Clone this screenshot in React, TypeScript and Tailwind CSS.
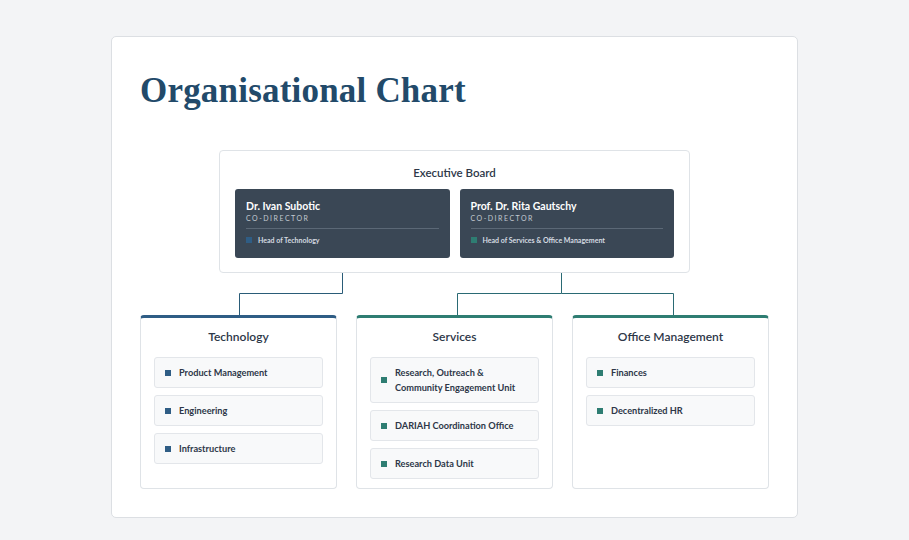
import React from "react";

const Item = ({ text, color }: { text: React.ReactNode; color: string }) => (
  <div className="flex items-center gap-[8px] rounded-[3px] border border-[#e3e6ea] bg-[#f8f9fa] px-[10px] py-[7px] min-h-[31px]">
    <span className={`w-[6px] h-[6px] shrink-0 ${color}`} />
    <span className="text-[9.2px] leading-[15px] font-bold text-[#2d3748]">{text}</span>
  </div>
);

const Dept = ({ title, top, sq, items }: { title: string; top: string; sq: string; items: React.ReactNode[] }) => (
  <div className={`flex-1 rounded-[4px] border border-[#dfe3e7] border-t-[3px] ${top} bg-white px-[13px] pt-[11px] pb-[14px] h-[174px]`}>
    <div className="text-center text-[12px] leading-[16px] font-semibold text-[#2d3748] mb-[12px]">{title}</div>
    <div className="flex flex-col gap-[7px]">
      {items.map((t, i) => <Item key={i} text={t} color={sq} />)}
    </div>
  </div>
);

const Person = ({ name, head, sq }: { name: string; head: string; sq: string }) => (
  <div className="flex-1 rounded-[3px] bg-[#3a4755] px-[11px] pt-[10px] pb-[9px] h-[69px]">
    <div className="text-[10.5px] font-bold text-white leading-[14px]">{name}</div>
    <div className="text-[7px] tracking-[1.5px] text-[#c3cad2] leading-[10px]">CO-DIRECTOR</div>
    <div className="border-t border-[#5b6876] mt-[5px] pt-[6px] flex items-center gap-[6px]">
      <span className={`w-[6px] h-[6px] ${sq}`} />
      <span className="text-[7px] font-bold text-[#d5dbe1]">{head}</span>
    </div>
  </div>
);

export default function App() {
  return (
    <div className="w-[909px] h-[540px] bg-[#f3f4f6] pt-[36px] flex justify-center" style={{ fontFamily: "Lato, 'Noto Sans', sans-serif" }}>
      <div className="w-[687px] h-[482px] bg-white rounded-[5px] border border-[#dcdfe3] px-[28px] pt-[32px]">
        <h1 className="text-[35px] leading-[44px] font-bold text-[#224a6a] tracking-[0.2px]" style={{ fontFamily: "'Liberation Serif', serif" }}>Organisational Chart</h1>
        <div className="mt-[37px] mx-auto w-[471px] rounded-[4px] border border-[#dfe3e7] px-[15px] pt-[14px] pb-[14px]">
          <div className="text-center text-[11.5px] leading-[16px] font-semibold text-[#2d3748] mb-[8px]">Executive Board</div>
          <div className="flex gap-[10px]">
            <Person name="Dr. Ivan Subotic" head="Head of Technology" sq="bg-[#2f5d85]" />
            <Person name="Prof. Dr. Rita Gautschy" head="Head of Services & Office Management" sq="bg-[#2e7d72]" />
          </div>
        </div>
        <svg width="632" height="42" className="block">
          <path d="M202.5 0 V20.5 H99.5 V42" fill="none" stroke="#2a5c78" strokeWidth="1" />
          <path d="M421.5 0 V20.5 H317.5 V42 M421.5 20.5 H533.5 V42" fill="none" stroke="#2a6a74" strokeWidth="1" />
        </svg>
        <div className="flex gap-[19px]">
          <Dept title="Technology" top="border-t-[#2f5d85]" sq="bg-[#2f5d85]" items={["Product Management", "Engineering", "Infrastructure"]} />
          <Dept title="Services" top="border-t-[#2e7d72]" sq="bg-[#2e7d72]" items={[<>Research, Outreach &amp;<br />Community Engagement Unit</>, "DARIAH Coordination Office", "Research Data Unit"]} />
          <Dept title="Office Management" top="border-t-[#2e7d72]" sq="bg-[#2e7d72]" items={["Finances", "Decentralized HR"]} />
        </div>
      </div>
    </div>
  );
}
